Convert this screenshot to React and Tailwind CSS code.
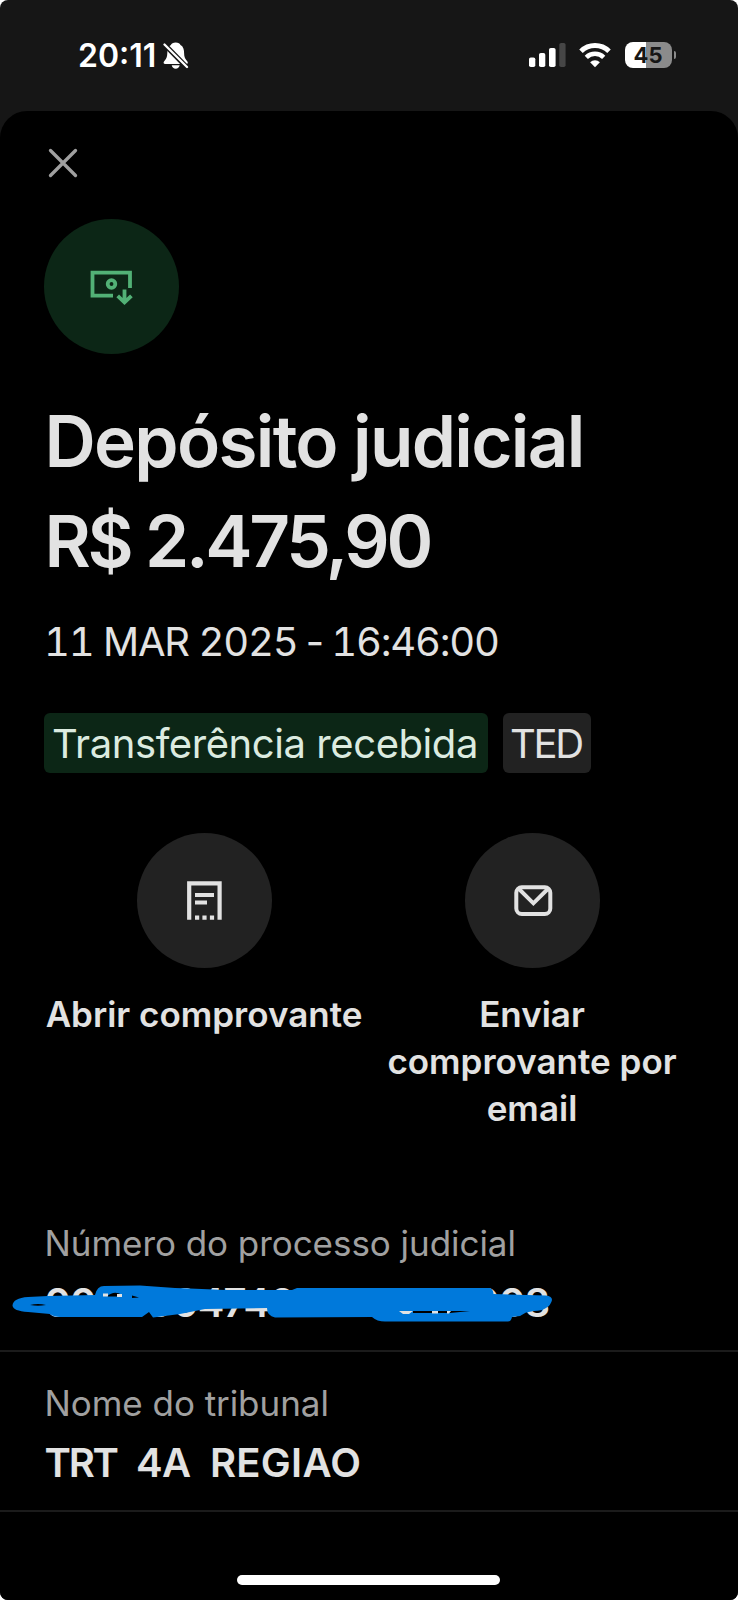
const actions = [
  { label: "Abrir comprovante", icon: ReceiptIcon },
  { label: "Enviar comprovante por email", icon: MailIcon },
];

function BellOffIcon() {
  return (
    <svg width="26" height="28" viewBox="0 0 26 28" fill="white">
      <path d="M12.7 0.5c-2.6 0-4.300 1-4.800 2.600C5.100 4.400 4.400 7.500 4.300 11c-.1 3.700-.7 5.200-2.300 7.200-.9 1.200-1.700 1.900-1.300 3 .2.600.7.800 1.400.800h21.200c.7 0 1.200-.2 1.400-.8.400-1.100-.4-1.800-1.300-3-1.600-2-2.200-3.500-2.300-7.200-.1-3.500-.8-6.600-3.600-7.900C17 1.500 15.300.500 12.700.500z" />
      <path d="M8.700 23.200h8c-.5 2-2 3.600-4 3.600s-3.500-1.600-4-3.600z" />
      <path d="M1.500 2.500 24 25.500" stroke="#161616" strokeWidth="5" />
      <path d="M1.500 2.500 24 25" stroke="white" strokeWidth="2.300" strokeLinecap="round" />
    </svg>
  );
}

function SignalIcon() {
  return (
    <svg width="37" height="24" viewBox="0 0 37 24" fill="white">
      <rect x="0" y="14.500" width="6.300" height="9.500" rx="1.800" />
      <rect x="10" y="10" width="6.300" height="14" rx="1.800" />
      <rect x="20" y="5" width="6.600" height="19" rx="1.800" />
      <rect x="30.300" y="0" width="6.300" height="24" rx="1.800" fill="#464646" />
    </svg>
  );
}

function WifiIcon() {
  return (
    <svg width="32" height="25" viewBox="0 0 32 25" fill="none" stroke="white">
      <path d="M2 8.300a20 20 0 0 1 28 0" strokeWidth="5" />
      <path d="M7.300 14.300a12.500 12.500 0 0 1 17.400 0" strokeWidth="4.600" />
      <path d="M16 24.300l-4.900-5a7 7 0 0 1 9.800 0z" fill="white" stroke="none" />
    </svg>
  );
}

function DepositIcon() {
  return (
    <svg className="size-full" viewBox="0 0 135 135" fill="none" stroke="#52b176" strokeWidth="3.800">
      <path d="M69 76.700H48.500V53.600H86V69" />
      <circle cx="67.500" cy="65" r="3.800" />
      <path d="M80.500 70.500V84M73.700 76.800l6.800 6.600 6.900-6.600" />
    </svg>
  );
}

function ReceiptIcon() {
  return (
    <svg className="size-full" viewBox="0 0 135 135" fill="none" stroke="#e2e2e2" strokeWidth="4.200">
      <path d="M52.200 86.700V50.400H82.600V86.700" />
      <path d="M58 62h19M58 69.500h12" strokeWidth="4" />
      <path d="M58 84.600h4.200M65.400 84.600h4.200M72.900 84.600h4.200" />
    </svg>
  );
}

function MailIcon() {
  return (
    <svg className="size-full" viewBox="0 0 135 135" fill="none" stroke="#e2e2e2" strokeWidth="4">
      <rect x="51.300" y="54.300" width="34" height="26.700" rx="5.500" />
      <path d="M53.500 55.500l14.900 14.800 14.900-14.800" />
    </svg>
  );
}

function StatusBar() {
  return (
    <div className="flex h-[111px] items-start justify-between pt-[42px] pr-[62px] pl-[78px]">
      <div className="flex items-start gap-[8px]">
        <span className="w-[77px] text-[32px] leading-[27px] font-semibold whitespace-nowrap">20:11</span>
        <BellOffIcon />
      </div>
      <div className="flex items-center">
        <SignalIcon />
        <div className="ml-[13px]">
          <WifiIcon />
        </div>
        <div className="ml-[14px] flex h-[26px] w-[47px] items-center justify-center rounded-[8px] bg-linear-to-r from-white from-45% to-[#8b8b8b] to-45% text-[22px] font-bold text-[#161616]">
          45
        </div>
        <div className="ml-[2px] h-2 w-[2.5px] rounded-r-full bg-[#8b8b8b]" />
      </div>
    </div>
  );
}

function Detail({ title, children }) {
  return (
    <div className="h-[160px] border-b-2 border-[#1b1b1b] pt-7 pl-[44.5px]">
      <p className="text-[35px] leading-[46px] tracking-[-0.05px] whitespace-nowrap text-[#a0a0a0]">{title}</p>
      <div className="relative mt-[7px] text-[40px] leading-[60px] font-semibold tracking-normal whitespace-pre">{children}</div>
    </div>
  );
}

// marker strokes drawn over the process number
function Scribble() {
  return (
    <svg className="absolute top-0 -left-[44.5px]" width="600" height="60" viewBox="0 1273 600 60">
      <path
        fill="#0079db"
        d="M12.500 1305.500Q13 1298 28 1297L48 1296 95 1295Q97 1286 104 1286L140 1285.500 175 1288 190 1288.500 225 1290 292 1290 297 1288H490Q493 1289 493.500 1294L546 1295.500Q552 1296 552 1300 551 1305 546 1308 542 1311 534 1311L526 1312.500 520 1316 512 1317Q511 1321.500 508 1321.500H385Q377 1321.500 372 1317L275 1317.500Q267 1316 267 1308L205 1309 180 1314 153 1317.500 149 1312 142 1317H60Q54 1317 50 1314L28 1312Q13 1311 12.500 1305.500z"
      />
      <path fill="#000" d="M30 1305Q38 1303 46 1305 38 1306.500 30 1305zM107 1296.500Q114 1290 122 1295L117 1296.500zM132 1295.500L139 1297.500 132 1298zM413 1311H470L450 1313H413z" />
      <path fill="#e2e2e2" d="M103 1293.500h5v3h-5zM117 1294h5v3h-5zM399 1311h14l-4 3h-6zM432 1311h6v2.500h-6zM447 1311h4l-2 2.500h-2z" />
    </svg>
  );
}

export default function App() {
  return (
    <div className="bg-white">
      <div className="flex h-[1600px] w-[738px] flex-col overflow-hidden rounded-[8px] bg-[#161616] font-['Inter',sans-serif] text-white">
        <StatusBar />

        <main className="flex flex-1 flex-col rounded-t-[27px] bg-black text-[#e2e2e2]">
          <button className="mt-[37px] ml-[48px] size-[30px]">
            <svg viewBox="0 0 30 30" stroke="#a0a0a0" strokeWidth="3.300" strokeLinecap="round">
              <path d="M2.500 2.500l25 25M27.500 2.500l-25 25" />
            </svg>
          </button>

          <div className="mt-[41px] ml-[44.4px] size-[135px] rounded-full bg-[#0c2616]">
            <DepositIcon />
          </div>

          <div className="mt-[37px] ml-[44.5px] text-[71px] leading-[100px] font-semibold whitespace-nowrap">
            <h1 className="tracking-[-1.7px]">Depósito judicial</h1>
            <p className="tracking-[-3.3px]">R$ 2.475,90</p>
          </div>
          <p className="mt-[21px] ml-[44px] text-[40px] leading-[60px] tracking-[-1.2px] whitespace-nowrap tabular-nums">
            11 MAR 2025<span className="[word-spacing:-5px]"> - 16:46:00</span>
          </p>

          <div className="mt-[41px] ml-[44px] flex gap-[15px] text-[40px] leading-[61px] whitespace-nowrap">
            <span className="h-[60px] w-[444px] rounded-[6px] bg-[#0c2616] pl-2 tracking-[-0.43px] text-[#dcebe0]">Transferência recebida</span>
            <span className="h-[60px] w-[88px] rounded-[6px] bg-[#222222] pl-[7px] tracking-[-2.3px]">TED</span>
          </div>

          <div className="mr-[42px] ml-[40px] mt-[60px] grid h-[299px] grid-cols-2">
            {actions.map(({ label, icon: Icon }) => (
              <div key={label} className="flex flex-col items-center">
                <div className="size-[135px] rounded-full bg-[#222222]">
                  <Icon />
                </div>
                <p className="mt-[23px] text-center text-[35px] leading-[47px] font-semibold">{label}</p>
              </div>
            ))}
          </div>

          <div className="mt-[60px]">
            <Detail title="Número do processo judicial">
              <span className="tracking-[-0.85px]">00000047400000000008</span>
              <Scribble />
            </Detail>
            <Detail title="Nome do tribunal">
              <span className="tracking-[-2.2px]">TRT</span>
              <span className="tracking-[-0.5px]">{"  4A  "}</span>
              <span className="tracking-[0.3px]">REGIAO</span>
            </Detail>
          </div>

          <div className="mr-auto ml-[237px] mt-[63px] h-[10px] w-[263px] rounded-full bg-white" />
        </main>
      </div>
    </div>
  );
}
